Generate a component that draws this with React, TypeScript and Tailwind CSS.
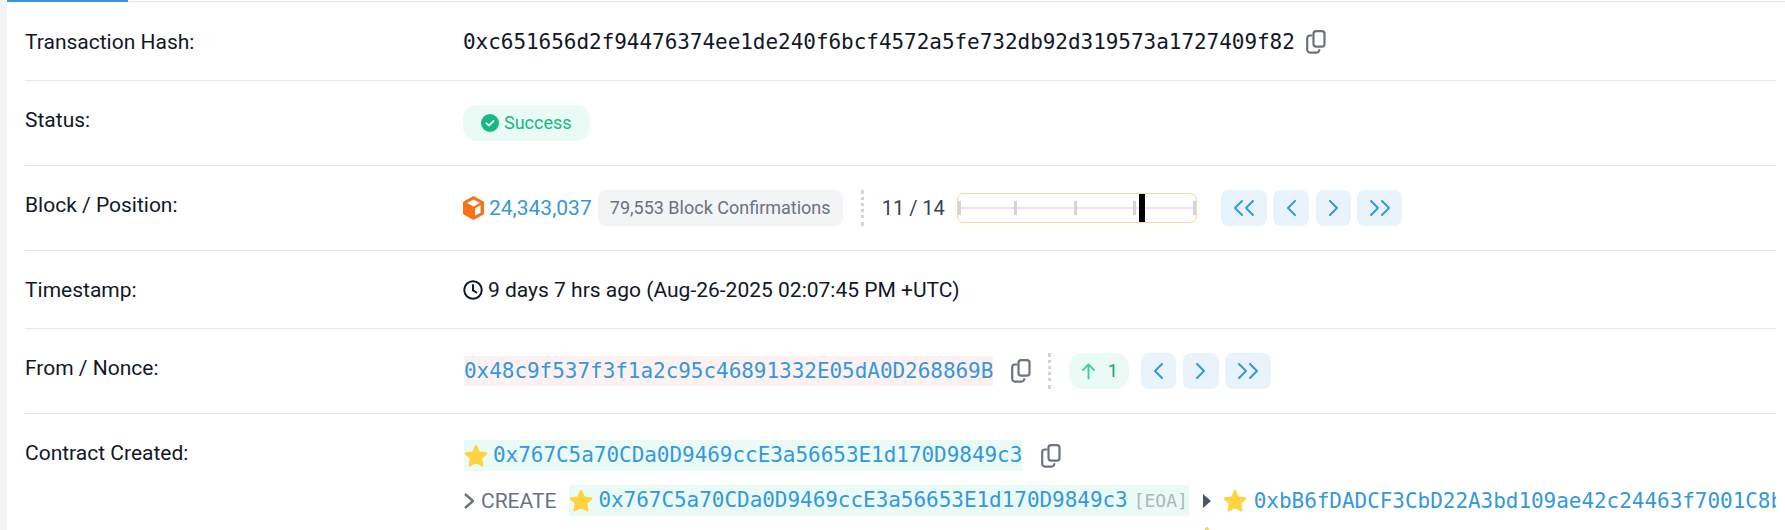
import React from "react";

const mono = "font-['DejaVu_Sans_Mono','Liberation_Mono',monospace] text-[21px] tracking-[-0.04px]";

function Copy({ className = "" }: { className?: string }) {
  return (
    <svg viewBox="0 0 20 24" className={"w-[20px] h-[24px] shrink-0 " + className} fill="none" stroke="#6b7280" strokeWidth="2.2">
      <rect x="7.5" y="1.2" width="11" height="15.5" rx="2.6" />
      <path d="M6.5 5.5H4A2.8 2.8 0 0 0 1.2 8.3v11.5A2.8 2.8 0 0 0 4 22.6h6.5a2.8 2.8 0 0 0 2.8-2.8v-.6" />
    </svg>
  );
}

function Star({ className = "" }: { className?: string }) {
  return (
    <svg viewBox="0 0 24 24" className={"w-[24px] h-[24px] shrink-0 " + className} fill="#fdd33f" stroke="#fdd33f" strokeWidth="2.4" strokeLinejoin="round">
      <path d="M12 2.2l3 6.5 7 .8-5.2 4.8 1.5 7L12 17.6l-6.3 3.7 1.5-7L2 9.5l7-.8z" />
    </svg>
  );
}

function Cube() {
  return (
    <svg viewBox="0 0 21 24" className="w-[21px] h-[24px] shrink-0">
      <path d="M10.5 0.5L20.5 6v12l-10 5.5L0.5 18V6z" fill="#f97316" stroke="#f97316" strokeLinejoin="round" />
      <path d="M4 7l6.5-3.4L17 7l-6.5 3.4z" fill="#fff" />
      <path d="M12 12.2L17.6 9.3v7.4L12 19.7z" fill="#fff" />
    </svg>
  );
}

function Nav({ kind, w }: { kind: "ll" | "l" | "r" | "rr"; w: string }) {
  const paths: Record<string, string[]> = {
    ll: ["M10 1L3 8l7 7", "M21 1l-7 7 7 7"],
    l: ["M10 1L3 8l7 7"],
    r: ["M3 1l7 7-7 7"],
    rr: ["M3 1l7 7-7 7", "M14 1l7 7-7 7"],
  };
  const vb = kind === "ll" || kind === "rr" ? 24 : 13;
  return (
    <span className={"h-[36px] rounded-[8px] bg-[#e9f3fb] flex items-center justify-center shrink-0 " + w}>
      <svg viewBox={`0 0 ${vb} 16`} width={vb} height={16} fill="none" stroke="#3598dc" strokeWidth="2" strokeLinecap="round" strokeLinejoin="round">
        {paths[kind].map((d) => (
          <path key={d} d={d} />
        ))}
      </svg>
    </span>
  );
}

function Divider({ className = "" }: { className?: string }) {
  return <span className={"w-0 h-[36px] border-l-[3px] border-dotted border-[#d1d5db] shrink-0 " + className} />;
}

function Row({ label, h, children, last }: { label: string; h: string; children: React.ReactNode; last?: boolean }) {
  return (
    <div className={"flex items-start " + h + (last ? "" : " border-b border-[#e5e7eb]")}>
      <div className="w-[438px] shrink-0 text-[#111827]">{label}</div>
      <div className="flex-1 min-w-0">{children}</div>
    </div>
  );
}

function Tick({ className = "" }: { className?: string }) {
  return <span className={"w-[3px] h-[14px] bg-[#d1d5db] relative z-10 shrink-0 " + className} />;
}

export default function App() {
  return (
    <div className="w-[1785px] h-[530px] overflow-hidden bg-white font-['Roboto',sans-serif] text-[21px] leading-[30px] text-[#111827] flex">
      <div className="w-[7px] bg-[#f3f4f6] shrink-0" />
      <div className="flex-1 min-w-0">
        <div className="h-[2px] border-b border-[#e5e7eb] relative">
          <div className="absolute left-0 top-0 w-[121px] h-[2px] bg-[#3598dc]" />
        </div>
        <div className="w-[1769px] pl-[18px] overflow-hidden">
          <Row label="Transaction Hash:" h="h-[79px] pt-[25px]">
            <div className="flex items-center gap-[11px] h-[30px]">
              <span className={mono + " text-[#111827]"}>0xc651656d2f94476374ee1de240f6bcf4572a5fe732db92d319573a1727409f82</span>
              <Copy />
            </div>
          </Row>
          <Row label="Status:" h="h-[85px] pt-[24px]">
            <span className="inline-flex items-center gap-[5px] h-[36px] w-[127px] pl-[18px] rounded-[14px] bg-[#e9fbf4] text-[#14b983] text-[18px]">
              <svg viewBox="0 0 20 20" className="w-[18px] h-[18px] shrink-0">
                <circle cx="10" cy="10" r="10" fill="#14b983" />
                <path d="M6 10.3l2.8 2.7L14 7.6" fill="none" stroke="#fff" strokeWidth="2" strokeLinecap="round" strokeLinejoin="round" />
              </svg>
              Success
            </span>
          </Row>
          <Row label="Block / Position:" h="h-[85px] pt-[24px]">
            <div className="flex items-center h-[36px]">
              <Cube />
              <span className="ml-[5px] text-[#3598dc]">24,343,037</span>
              <span className="ml-[6px] h-[36px] w-[245px] rounded-[8px] bg-[#f3f4f6] text-[#6b7280] text-[18px] flex items-center justify-center">79,553 Block Confirmations</span>
              <Divider className="ml-[18px]" />
              <span className="ml-[18px] text-[#374151] text-[20px]">11 / 14</span>
              <div className="ml-[12px] w-[240px] h-[30px] rounded-[6px] border border-[#fdd6a5] relative flex items-center overflow-hidden">
                <span className="absolute left-0 right-0 top-[13px] h-[2px] bg-[#e5e7eb]" />
                <Tick />
                <Tick className="ml-[53px]" />
                <Tick className="ml-[57px]" />
                <Tick className="ml-[56px]" />
                <Tick className="ml-[57px]" />
                <span className="absolute left-[181px] top-0 w-[6px] h-[28px] bg-black z-20" />
              </div>
              <div className="ml-[24px] flex gap-[6.5px]">
                <Nav kind="ll" w="w-[46px]" />
                <Nav kind="l" w="w-[36px]" />
                <Nav kind="r" w="w-[35px]" />
                <Nav kind="rr" w="w-[45px]" />
              </div>
            </div>
          </Row>
          <Row label="Timestamp:" h="h-[78px] pt-[24px]">
            <div className="flex items-center gap-[5px] h-[30px]">
              <svg viewBox="0 0 24 24" className="w-[20px] h-[20px] shrink-0" fill="none" stroke="#111827" strokeWidth="2.4" strokeLinecap="round" strokeLinejoin="round">
                <circle cx="12" cy="12" r="10.5" />
                <path d="M12 6v6.5l4 2.5" />
              </svg>
              <span>9 days 7 hrs ago (Aug-26-2025 02:07:45 PM +UTC)</span>
            </div>
          </Row>
          <Row label="From / Nonce:" h="h-[85px] pt-[24px]">
            <div className="flex items-center h-[36px]">
              <span className={mono + " ml-[1px] h-[30px] leading-[30px] bg-[#fef1f1] text-[#3598dc]"}>0x48c9f537f3f1a2c95c46891332E05dA0D268869B</span>
              <Copy className="ml-[18px]" />
              <Divider className="ml-[17px]" />
              <span className="ml-[18px] w-[60px] h-[36px] rounded-[14px] bg-[#e9fbf4] text-[#14a46f] text-[18px] flex items-center justify-center gap-[12px]">
                <svg viewBox="0 0 16 20" width="15" height="20" fill="none" stroke="#34d399" strokeWidth="2" strokeLinecap="round" strokeLinejoin="round">
                  <path d="M8 18V3M2 9l6-6 6 6" />
                </svg>
                1
              </span>
              <div className="ml-[12px] flex gap-[6.5px]">
                <Nav kind="l" w="w-[35px]" />
                <Nav kind="r" w="w-[36px]" />
                <Nav kind="rr" w="w-[46px]" />
              </div>
            </div>
          </Row>
          <Row label="Contract Created:" h="h-[120px] pt-[24px]" last>
            <div className="flex items-center gap-[19px] h-[31px] mt-[2px]">
              <span className={mono + " ml-[1px] h-[31px] leading-[31px] bg-[#e9fbf4] text-[#3598dc] flex items-center gap-[5px]"}>
                <Star />
                0x767C5a70CDa0D9469ccE3a56653E1d170D9849c3
              </span>
              <Copy />
            </div>
            <div className="flex items-center h-[31px] mt-[14px] whitespace-nowrap">
              <svg viewBox="0 0 10 18" width="10" height="18" className="ml-[1px] shrink-0" fill="none" stroke="#6b7280" strokeWidth="2.4" strokeLinejoin="round">
                <path d="M1 2l8 7-8 7" />
              </svg>
              <span className="ml-[7px] text-[#6b7280]">CREATE</span>
              <span className={mono + " ml-[13px] h-[31px] leading-[31px] bg-[#e9fbf4] text-[#3598dc] flex items-center gap-[5px] pr-[1px]"}>
                <Star />
                0x767C5a70CDa0D9469ccE3a56653E1d170D9849c3
                <span className="text-[#adb5bd] text-[18px] ml-[1px]">[EOA]</span>
              </span>
              <svg viewBox="0 0 10 18" width="10" height="18" className="ml-[13px] shrink-0" fill="#4b5563">
                <path d="M1 2l8 7-8 7z" />
              </svg>
              <span className={mono + " ml-[11px] text-[#3598dc] flex items-center gap-[7px]"}>
                <Star />
                0xbB6fDADCF3CbD22A3bd109ae42c24463f7001C8b
              </span>
            </div>
            <div className="h-[31px] mt-[10px] pl-[732px]">
              <Star />
            </div>
          </Row>
        </div>
      </div>
    </div>
  );
}
